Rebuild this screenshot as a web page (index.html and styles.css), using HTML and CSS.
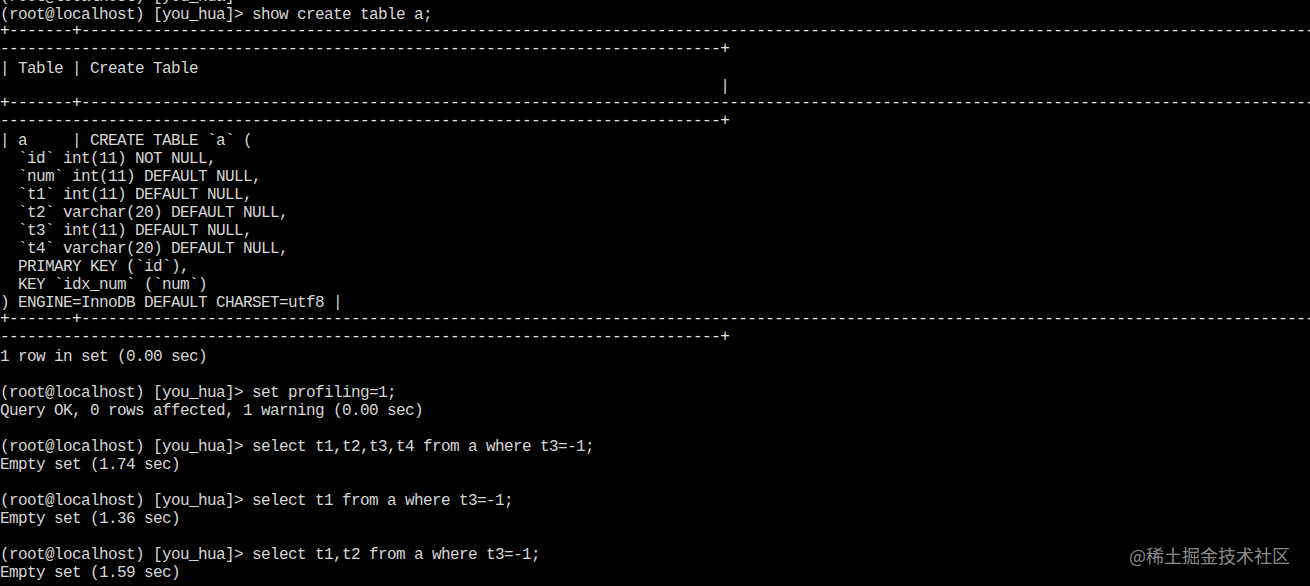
FILE: index.html
```html
<!DOCTYPE html>
<html lang="zh">
<head>
<meta charset="utf-8">
<title>mysql</title>
<link rel="stylesheet" href="styles.css">
</head>
<body>
<div class="screen">
<div class="term">
<div class="line">(root@localhost) [you_hua]&gt;</div>
<div class="line">(root@localhost) [you_hua]&gt; show create table a;</div>
<div class="line rule">+-------+------------------------------------------------------------------------------------------------------------------------------------------------------------</div>
<div class="line rule">--------------------------------------------------------------------------------+</div>
<div class="line">| Table | Create Table</div>
<div class="line">                                                                                |</div>
<div class="line rule">+-------+------------------------------------------------------------------------------------------------------------------------------------------------------------</div>
<div class="line rule">--------------------------------------------------------------------------------+</div>
<div class="line">| a     | CREATE TABLE `a` (</div>
<div class="line">  `id` int(11) NOT NULL,</div>
<div class="line">  `num` int(11) DEFAULT NULL,</div>
<div class="line">  `t1` int(11) DEFAULT NULL,</div>
<div class="line">  `t2` varchar(20) DEFAULT NULL,</div>
<div class="line">  `t3` int(11) DEFAULT NULL,</div>
<div class="line">  `t4` varchar(20) DEFAULT NULL,</div>
<div class="line">  PRIMARY KEY (`id`),</div>
<div class="line">  KEY `idx_num` (`num`)</div>
<div class="line">) ENGINE=InnoDB DEFAULT CHARSET=utf8 |</div>
<div class="line rule">+-------+------------------------------------------------------------------------------------------------------------------------------------------------------------</div>
<div class="line rule">--------------------------------------------------------------------------------+</div>
<div class="line">1 row in set (0.00 sec)</div>
<div class="line"> </div>
<div class="line">(root@localhost) [you_hua]&gt; set profiling=1;</div>
<div class="line">Query OK, 0 rows affected, 1 warning (0.00 sec)</div>
<div class="line"> </div>
<div class="line">(root@localhost) [you_hua]&gt; select t1,t2,t3,t4 from a where t3=-1;</div>
<div class="line">Empty set (1.74 sec)</div>
<div class="line"> </div>
<div class="line">(root@localhost) [you_hua]&gt; select t1 from a where t3=-1;</div>
<div class="line">Empty set (1.36 sec)</div>
<div class="line"> </div>
<div class="line">(root@localhost) [you_hua]&gt; select t1,t2 from a where t3=-1;</div>
<div class="line">Empty set (1.59 sec)</div>
</div>
<div class="watermark">@稀土掘金技术社区</div>
</div>
</body>
</html>
```

FILE: styles.css
```css
html, body {
  margin: 0;
  padding: 0;
  background: #000;
}
body {
  width: 1310px;
  height: 586px;
  overflow: hidden;
}
.screen {
  position: relative;
  width: 1310px;
  height: 586px;
  overflow: hidden;
  background: #000;
}
.term {
  margin-top: -12px;
  font-family: "Liberation Mono", "Courier New", monospace;
  font-size: 16px;
  letter-spacing: -0.6px;
  line-height: 18px;
  color: #d6d6d6;
}
.line {
  height: 18px;
  white-space: pre;
  overflow: hidden;
}
.rule {
  line-height: 14px;
  color: #e6e6e6;
}
.watermark {
  position: absolute;
  right: 20px;
  bottom: 19px;
  font-family: "Noto Sans CJK SC", "Noto Sans", sans-serif;
  font-size: 18px;
  line-height: 24px;
  color: #8a8a8a;
}
```
